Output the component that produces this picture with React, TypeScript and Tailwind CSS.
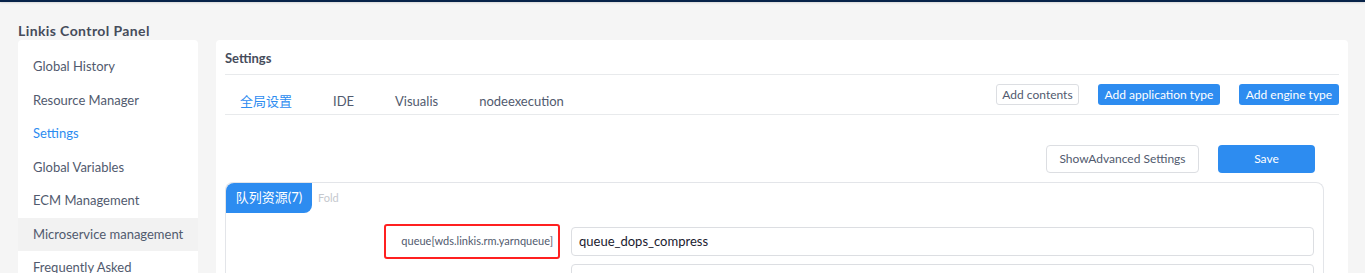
import React from "react";

const menu = [
  "Global History",
  "Resource Manager",
  "Settings",
  "Global Variables",
  "ECM Management",
  "Microservice management",
  "Frequently Asked",
];

const tabs = [
  { name: "全局设置", active: true },
  { name: "IDE" },
  { name: "Visualis" },
  { name: "nodeexecution" },
];

export default function App() {
  return (
    <div
      className="h-[273px] overflow-hidden bg-[#f5f5f5] text-[13px] text-[#515a6e]"
      style={{ fontFamily: 'Lato, "Noto Sans CJK SC", sans-serif' }}
    >
      <div className="h-[2px] bg-[#082349] shadow-[0_1px_2px_rgba(0,0,0,0.12)]" />
      <div className="px-[18px]">
        <h1 className="h-[38px] pt-[19px] text-[14px] font-bold leading-[20px] tracking-[0.4px] text-[#464c5b]">
          Linkis Control Panel
        </h1>
        <div className="flex gap-[18px]">
          {/* sidebar */}
          <div className="w-[180px] shrink-0 rounded-t-[4px] bg-white pt-[10px]">
            {menu.map((m) => (
              <div
                key={m}
                className={`flex h-[33.5px] items-center pl-[15px] ${
                  m === "Microservice management" ? "bg-[#f2f2f2]" : ""
                } ${m === "Settings" ? "text-[#2d8cf0]" : ""}`}
              >
                {m}
              </div>
            ))}
          </div>

          {/* main */}
          <div className="w-[1132px] shrink-0 rounded-t-[4px] bg-white px-[9px]">
            <div className="flex h-[35px] items-end border-b border-[#e8eaec] pb-[6px] font-bold text-[#464c5b]">
              Settings
            </div>
            <div className="flex h-[40px] border-b border-[#e8eaec]">
              <div className="flex items-end pb-[3px]">
                {tabs.map((t) => (
                  <div
                    key={t.name}
                    className={`mr-[11px] px-[15px] ${t.active ? "text-[#2d8cf0]" : ""}`}
                  >
                    {t.name}
                  </div>
                ))}
              </div>
              <div className="ml-auto flex items-start gap-[19px] pt-[9px] text-[12px]">
                <button className="h-[21px] w-[83px] rounded-[3px] border border-[#dcdee2] bg-white text-[#515a6e]">
                  Add contents
                </button>
                <button className="h-[21px] w-[122px] rounded-[3px] bg-[#2d8cf0] text-white">
                  Add application type
                </button>
                <button className="h-[21px] w-[100px] rounded-[3px] bg-[#2d8cf0] text-white">
                  Add engine type
                </button>
              </div>
            </div>

            <div className="mr-[15px]">
              <div className="flex justify-end gap-[19px] pr-[9px] pt-[30px] text-[12px]">
                <button className="h-[28px] w-[153px] rounded-[4px] border border-[#dcdee2] bg-white text-[#515a6e]">
                  ShowAdvanced Settings
                </button>
                <button className="h-[28px] w-[97px] rounded-[4px] bg-[#2d8cf0] text-white">
                  Save
                </button>
              </div>

              <div className="mt-[9px] rounded-t-[8px] border border-b-0 border-[#e3e5e9]">
                <div className="flex items-center">
                  <div className="flex h-[30px] w-[86px] items-center justify-center rounded-tl-[8px] rounded-br-[8px] bg-[#2d8cf0] text-white">
                    队列资源(7)
                  </div>
                  <span className="ml-[6px] text-[11px] text-[#c5c8ce]">Fold</span>
                </div>
                <div className="flex items-start pt-[11px]">
                  <div className="ml-[158px] flex h-[35px] w-[176px] items-center justify-end rounded-[3px] border-2 border-[#ff2020] pr-[5px] text-[11px] text-[#515a6e]">
                    queue[wds.linkis.rm.yarnqueue]
                  </div>
                  <div className="ml-[11px] mr-[9px] flex-1 pt-[3px]">
                    <div className="flex h-[29px] items-center rounded-[4px] border border-[#dcdee2] px-[7px] text-[#1a1a2e]">
                      queue_dops_compress
                    </div>
                    <div className="mt-[8px] h-[29px] rounded-[4px] border border-[#dcdee2]" />
                  </div>
                </div>
              </div>
            </div>
          </div>
        </div>
      </div>
    </div>
  );
}
